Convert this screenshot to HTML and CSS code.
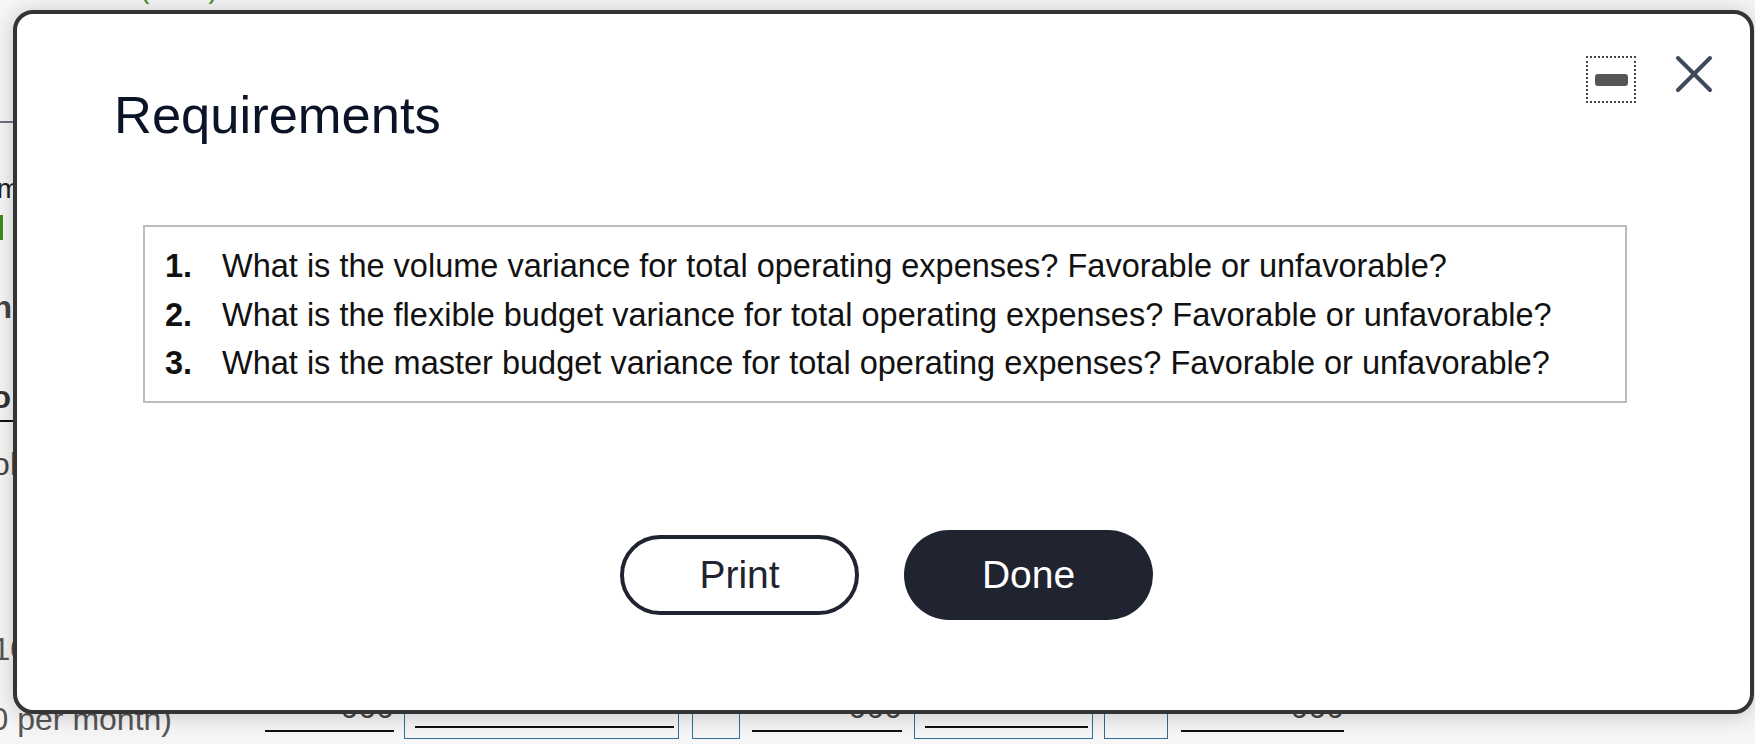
FILE: index.html
```html
<!DOCTYPE html>
<html lang="en">
<head>
    <meta charset="UTF-8">
    <meta name="viewport" content="width=device-width, initial-scale=1.0">
    <title>Requirements</title>
    <link rel="stylesheet" href="styles.css">
</head>
<body>
    <!-- the worksheet behind the dialog, mostly covered -->
    <div class="sheet">
        <div class="top-note"><span>(units)</span></div>
        <div class="rule rule-head"></div>
        <div class="frag frag-m"><span>Maximum</span></div>
        <div class="mark-green"></div>
        <div class="frag frag-n"><span>Variation</span></div>
        <div class="frag frag-o"><span>Ratio</span></div>
        <div class="rule rule-under"></div>
        <div class="frag frag-ol"><span>Control</span></div>
        <div class="frag frag-1"><span>Units 10</span></div>
        <div class="totals-row">
            <div class="label"><span>(1,000 per month)</span></div>
            <div class="amount amount-1"><span>000</span></div>
            <div class="entry entry-wide"><div class="entry-line"></div></div>
            <div class="entry entry-small"></div>
            <div class="amount amount-2"><span>000</span></div>
            <div class="entry entry-mid"><div class="entry-line"></div></div>
            <div class="entry entry-tag"></div>
            <div class="amount amount-3"><span>000</span></div>
        </div>
    </div>

    <div class="dialog" role="dialog">
        <div class="dialog-head">
            <h1 class="dialog-title">Requirements</h1>
            <div class="dialog-tools">
                <button class="tool-min" aria-label="Minimize"><span></span></button>
                <button class="tool-close" aria-label="Close">
                    <svg width="40" height="40" viewBox="0 0 40 40">
                        <path d="M4 4 L36 36 M36 4 L4 36" stroke="#3e4a5a" stroke-width="4" stroke-linecap="round" fill="none"/>
                    </svg>
                </button>
            </div>
        </div>

        <div class="req-box">
            <ol class="req-list">
                <li><b>1.</b><span>What is the volume variance for total operating expenses? Favorable or unfavorable?</span></li>
                <li><b>2.</b><span>What is the flexible budget variance for total operating expenses? Favorable or unfavorable?</span></li>
                <li><b>3.</b><span>What is the master budget variance for total operating expenses? Favorable or unfavorable?</span></li>
            </ol>
        </div>

        <div class="dialog-actions">
            <button class="btn-print">Print</button>
            <button class="btn-done">Done</button>
        </div>
    </div>
</body>
</html>
```

FILE: styles.css
```css
body {
    margin: 0;
    padding: 0;
    height: 744px;
    overflow: hidden;
    background-color: #f6f6f6;
    font-family: "Liberation Sans", Arial, sans-serif;
}

/* background worksheet */
.sheet {
    display: flex;
    flex-direction: column;
    align-items: flex-start;
}

.top-note {
    height: 4px;
    overflow: hidden;
    padding-left: 140px;
    color: #3c8c1c;
    font-size: 28px;
}

.top-note span {
    display: block;
    margin-top: -26px;
    line-height: 30px;
}

.rule {
    width: 13px;
    height: 2px;
}

.rule-head {
    margin-top: 117px;
    background-color: #6b7280;
}

.rule-under {
    margin-top: 7px;
    background-color: #111;
}

.frag {
    width: 26px;
    display: flex;
    justify-content: flex-end;
    white-space: nowrap;
    font-size: 32px;
    line-height: 32px;
    color: #555;
}

.frag-m {
    margin-top: 50px;
    width: 20px;
    font-size: 28px;
    color: #222;
}

.mark-green {
    margin-top: 10px;
    width: 3px;
    height: 25px;
    background-color: #3c8c1c;
}

.frag-n {
    margin-top: 51px;
    width: 12px;
    color: #444;
    font-weight: bold;
}

.frag-o {
    margin-top: 58px;
    width: 11px;
    color: #333;
    font-weight: bold;
}

.frag-ol {
    margin-top: 26px;
    width: 17px;
    color: #444;
}

.frag-1 {
    margin-top: 153px;
    width: 28px;
}

.totals-row {
    margin-top: 38px;
    display: flex;
    align-items: flex-start;
}

.totals-row .label {
    width: 172px;
    display: flex;
    justify-content: flex-end;
    white-space: nowrap;
    font-size: 32px;
    line-height: 32px;
    color: #555;
}

.amount {
    height: 27px;
    border-bottom: 2px solid #111;
    text-align: right;
    font-size: 32px;
    line-height: 8px;
    color: #444;
}

.amount-1 { margin-left: 93px; width: 129px; }
.amount-2 { margin-left: 12px; width: 150px; }
.amount-3 { margin-left: 13px; width: 163px; }

.entry {
    height: 35px;
    border: 1.5px solid #2f6f96;
    border-top: none;
    box-sizing: content-box;
}

.entry-wide { margin-left: 10px; width: 273px; }
.entry-small { margin-left: 13px; width: 46px; }
.entry-mid { margin-left: 12px; width: 177px; }
.entry-tag { margin-left: 11px; width: 62px; }

.entry-line {
    margin: 23px 4px 0 10px;
    height: 2px;
    background-color: #111;
}

/* dialog over the sheet */
.dialog {
    position: absolute;
    left: 13px;
    top: 10px;
    width: 1741px;
    height: 704px;
    box-sizing: border-box;
    background-color: #fff;
    border: 4px solid #343434;
    border-radius: 20px;
    box-shadow: 0 2px 22px rgba(0, 0, 0, 0.2);
}

.dialog-head {
    display: flex;
    justify-content: space-between;
    align-items: flex-start;
    padding: 40px 36px 0 97px;
}

.dialog-title {
    margin: 30px 0 0 0;
    font-size: 52.5px;
    line-height: 62px;
    font-weight: normal;
    color: #0b1426;
}

.dialog-tools {
    display: flex;
    align-items: flex-start;
    gap: 38px;
}

.tool-min {
    margin-top: 2px;
    width: 50px;
    height: 47px;
    padding: 0;
    border: 2px dotted #444;
    background: none;
    display: flex;
    align-items: center;
    justify-content: center;
}

.tool-min span {
    width: 33px;
    height: 12px;
    border-radius: 3px;
    background-color: #555;
}

.tool-close {
    padding: 0;
    border: none;
    background: none;
    width: 40px;
    height: 40px;
}

.tool-close svg {
    display: block;
}

.req-box {
    margin: 79px 123px 0 126px;
    border: 2px solid #bcbcbc;
    padding: 15px 20px 13px;
}

.req-list {
    list-style: none;
    margin: 0;
    padding: 0;
    font-size: 32.5px;
    line-height: 48.7px;
    color: #111;
}

.req-list li {
    display: grid;
    grid-template-columns: 57px 1fr;
}

.dialog-actions {
    margin-top: 127px;
    padding-left: 6px;
    display: flex;
    justify-content: center;
    align-items: center;
    gap: 45px;
}

.btn-print,
.btn-done {
    font-family: "Liberation Sans", Arial, sans-serif;
    font-size: 39px;
    cursor: pointer;
    padding: 0;
}

.btn-print {
    width: 239px;
    height: 80px;
    border: 4px solid #1f2430;
    border-radius: 40px;
    background-color: #fff;
    color: #1f2430;
}

.btn-done {
    width: 249px;
    height: 90px;
    border: none;
    border-radius: 45px;
    background-color: #1f2430;
    color: #fff;
}
```
